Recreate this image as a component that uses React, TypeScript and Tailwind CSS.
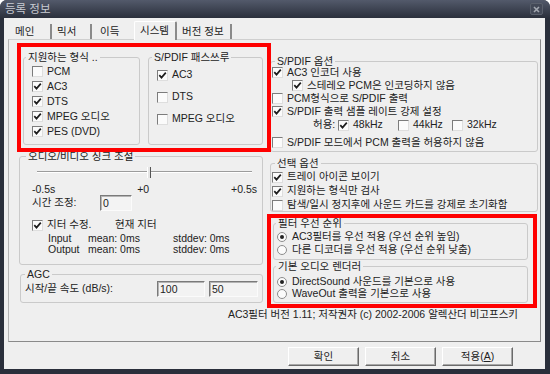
import React from "react";

const FONT = "font-['Liberation_Sans','Noto_Sans_CJK_KR',sans-serif]";

function Check({ on }: { on?: boolean }) {
  return (
    <span className="flex h-[11px] w-[11px] shrink-0 items-center justify-center border border-t-[#7c7c7c] border-l-[#7c7c7c] border-r-[#dedede] border-b-[#dedede] bg-[#fbfbfb]">
      {on && (
        <svg width="9" height="9" viewBox="0 0 9 9">
          <path d="M1.3 4.1 L3.5 6.6 L7.8 1.6" fill="none" stroke="#1c1c1c" strokeWidth="1.7" />
        </svg>
      )}
    </span>
  );
}

function Radio({ on }: { on?: boolean }) {
  return (
    <span className="flex h-[10px] w-[10px] shrink-0 items-center justify-center rounded-full border border-[#8c8c8c] bg-[#fbfbfb]">
      {on && <span className="h-[4px] w-[4px] rounded-full bg-[#222]" />}
    </span>
  );
}

function Field({ value, className = "" }: { value: string; className?: string }) {
  return (
    <div
      className={`h-[16px] border border-t-[#7a7a7a] border-l-[#7a7a7a] border-r-[#fbfbfb] border-b-[#fbfbfb] bg-[#f3f3f3] pl-[2px] leading-[14px] shadow-[inset_1px_1px_0_#b4b4b4] ${className}`}
    >
      {value}
    </div>
  );
}

function Group({
  title,
  className = "",
  legend = "ml-[3px]",
  children,
}: {
  title: string;
  className?: string;
  legend?: string;
  children?: React.ReactNode;
}) {
  return (
    <fieldset className={`rounded-[3px] border border-[#cacaca] ${className}`}>
      <legend className={`px-[2px] leading-[12px] ${legend}`}>{title}</legend>
      {children}
    </fieldset>
  );
}

function CheckRow({ on, label, className = "" }: { on?: boolean; label: string; className?: string }) {
  return (
    <div className={`flex items-center gap-[4px] ${className}`}>
      <Check on={on} />
      <span className="whitespace-nowrap">{label}</span>
    </div>
  );
}

function RadioRow({ on, label, className = "" }: { on?: boolean; label: string; className?: string }) {
  return (
    <div className={`flex items-center gap-[5px] ${className}`}>
      <Radio on={on} />
      <span className="whitespace-nowrap">{label}</span>
    </div>
  );
}

function Tabs() {
  return (
    <div className="flex h-[21px] items-end pl-[4px]">
      <div className="h-[15px] w-[44px] border-r-2 border-[#8a8a8a] pl-[7px] leading-[15px]">메인</div>
      <div className="h-[15px] w-[40px] border-r-2 border-[#8a8a8a] pl-[5px] leading-[15px]">믹서</div>
      <div className="h-[15px] w-[42px] pl-[8px] leading-[15px]">이득</div>
      <div className="relative z-10 -mb-px h-[19px] w-[43px] rounded-t-[2px] border-t border-l border-white border-r-2 border-r-[#8a8a8a] bg-[#efefef] pl-[5px] pt-[1px] leading-[15px]">
        시스템
      </div>
      <div className="h-[15px] w-[55px] border-r-2 border-[#8a8a8a] pl-[5px] leading-[15px]">버전 정보</div>
    </div>
  );
}

function LeftColumn() {
  return (
    <div className="flex w-[244px] flex-col pt-[11px]">
      <div className="flex gap-[8px] pl-[4px]">
        <Group title="지원하는 형식 .." className="h-[94px] w-[117px]" legend="ml-[2px]">
          <div className="flex flex-col pl-[8px] pt-[1px]">
            <CheckRow label="PCM" className="h-[15px]" />
            <CheckRow on label="AC3" className="h-[15px]" />
            <CheckRow on label="DTS" className="h-[15px]" />
            <CheckRow on label="MPEG 오디오" className="h-[15px]" />
            <CheckRow on label="PES (DVD)" className="h-[15px]" />
          </div>
        </Group>
        <Group title="S/PDIF 패스쓰루" className="h-[94px] w-[115px]" legend="ml-[3px]">
          <div className="flex flex-col pl-[8px] pt-[1px]">
            <CheckRow on label="AC3" className="h-[22px]" />
            <CheckRow label="DTS" className="h-[22px]" />
            <CheckRow label="MPEG 오디오" className="h-[22px]" />
          </div>
        </Group>
      </div>

      <Group title="오디오/비디오 싱크 조절" className="mt-[5px] h-[115px]" legend="ml-[6px]">
        <div className="box-content flex h-[12px] items-center pl-[17px] pr-[10px] pt-[4px]">
          <div className="h-[2px] w-[110px] border-t border-[#9c9c9c] border-b border-b-white" />
          <div className="h-[11px] w-[4px] border-l border-white border-r border-r-[#555] bg-[#e4e4e4]" />
          <div className="h-[2px] flex-1 border-t border-[#9c9c9c] border-b border-b-white" />
        </div>
        <div className="mt-[5px] flex h-[12px] items-center justify-between pl-[12px] pr-[5px] leading-[12px]">
          <span>-0.5s</span>
          <span>+0</span>
          <span>+0.5s</span>
        </div>
        <div className="flex h-[15px] items-center pl-[12px]">
          <span className="w-[68px]">시간 조정:</span>
          <Field value="0" className="h-[15px] w-[32px]" />
        </div>
        <div className="mt-[8px] flex h-[14px] items-center pl-[12px]">
          <Check on />
          <span className="ml-[4px] w-[68px]">지터 수정.</span>
          <span>현재 지터</span>
        </div>
        <div className="mt-[1px] flex h-[11px] items-center pl-[28px] leading-[11px]">
          <span className="w-[40px]">Input</span>
          <span className="w-[85px]">mean: 0ms</span>
          <span>stddev: 0ms</span>
        </div>
        <div className="flex h-[11px] items-center pl-[28px] leading-[11px]">
          <span className="w-[40px]">Output</span>
          <span className="w-[85px]">mean: 0ms</span>
          <span>stddev: 0ms</span>
        </div>
      </Group>

      <Group title="AGC" className="ml-[1px] mt-[3px] h-[35px]" legend="ml-[4px]">
        <div className="mt-[1px] flex h-[16px] items-center pl-[4px] pr-[4px]">
          <span className="flex-1">시작/끝 속도 (dB/s):</span>
          <Field value="100" className="w-[48px]" />
          <Field value="50" className="ml-[4px] w-[49px]" />
        </div>
      </Group>
    </div>
  );
}

function RightColumn() {
  return (
    <div className="flex w-[268px] flex-col pt-[15px]">
      <Group title="S/PDIF 옵션" className="h-[97px]" legend="ml-[4px]">
        <div className="-mt-[1px] flex flex-col pl-[1px]">
          <CheckRow on label="AC3 인코더 사용" className="h-[13px]" />
          <CheckRow on label="스테레오 PCM은 인코딩하지 않음" className="h-[13px] pl-[20px]" />
          <CheckRow label="PCM형식으로 S/PDIF 출력" className="h-[13px]" />
          <CheckRow on label="S/PDIF 출력 샘플 레이트 강제 설정" className="h-[13px]" />
          <div className="flex h-[14px] items-center pl-[41px]">
            <span className="w-[25px]">허용:</span>
            <CheckRow on label="48kHz" className="w-[60px]" />
            <CheckRow label="44kHz" className="w-[54px]" />
            <CheckRow label="32kHz" />
          </div>
          <CheckRow label="S/PDIF 모드에서 PCM 출력을 허용하지 않음" className="mt-[4px] h-[13px]" />
        </div>
      </Group>

      <Group title="선택 옵션" className="mt-[5px] h-[55px]" legend="ml-[4px]">
        <div className="flex flex-col pl-[1px] pt-[1px]">
          <CheckRow on label="트레이 아이콘 보이기" className="h-[14px]" />
          <CheckRow on label="지원하는 형식만 검사" className="h-[14px]" />
          <CheckRow label="탐색/일시 정지후에 사운드 카드를 강제로 초기화함" className="h-[14px]" />
        </div>
      </Group>

      <Group title="필터 우선 순위" className="ml-[3px] mr-[10px] mt-[5px] h-[43px]" legend="ml-[2px]">
        <div className="flex flex-col pl-[3px] pt-[1px]">
          <RadioRow on label="AC3필터를 우선 적용 (우선 순위 높임)" className="h-[13px]" />
          <RadioRow label="다른 디코더를 우선 적용 (우선 순위 낮춤)" className="h-[13px]" />
        </div>
      </Group>

      <Group title="기본 오디오 렌더러" className="ml-[3px] mr-[10px] h-[43px]" legend="ml-[2px]">
        <div className="flex flex-col pl-[3px] pt-[4px]">
          <RadioRow on label="DirectSound 사운드를 기본으로 사용" className="h-[12px]" />
          <RadioRow label="WaveOut 출력을 기본으로 사용" className="h-[12px]" />
        </div>
      </Group>
    </div>
  );
}

export default function App() {
  return (
    <div className={`${FONT} flex h-[374px] w-[550px] flex-col overflow-hidden rounded-t-[7px] bg-[#2a2f3b] text-[10.5px] text-[#222]`}>
      <div className="flex h-[18px] shrink-0 items-center bg-gradient-to-b from-[#535a6b] to-[#2b303c] pl-[5px] pr-[7px]">
        <span className="text-[11.5px] leading-[14px] text-[#c9ccd3]">등록 정보</span>
        <div className="flex-1" />
        <div className="flex h-[12px] w-[13px] items-center justify-center rounded-[2px] border border-[#5a606c] bg-[#434957]">
          <svg width="7" height="7" viewBox="0 0 7 7">
            <path d="M1 1 L6 6 M6 1 L1 6" stroke="#a3a8b1" strokeWidth="1.6" />
          </svg>
        </div>
      </div>

      <div className="ml-[4px] flex h-[351px] w-[541px] flex-col bg-[#efefef]">
        <Tabs />
        <div className="relative ml-[4px] h-[303px] w-[533px] border border-t-[#cfcfcf] border-l-[#b4b4b4] border-r-[#8a8a8a] border-b-[#8a8a8a]">
          <div className="flex gap-[7px] pl-[10px]">
            <LeftColumn />
            <RightColumn />
          </div>
          <div className="mt-[5px] flex h-[13px] items-center justify-end pr-[22px] leading-[13px]">
            AC3필터 버전 1.11; 저작권자 (c) 2002-2006 알렉산더 비고프스키
          </div>

          <div className="pointer-events-none absolute left-[8px] top-[3px] h-[109px] w-[254px] border-4 border-[#ff0000]" />
          <div className="pointer-events-none absolute left-[258px] top-[174px] h-[94px] w-[270px] border-4 border-[#ff0000]" />
        </div>

        <div className="mt-[5px] flex justify-end gap-[6px] pr-[32px]">
          {["확인", "취소"].map((t) => (
            <div
              key={t}
              className="flex h-[19px] w-[71px] items-center justify-center border border-t-white border-l-white border-r-[#6a6a6a] border-b-[#6a6a6a] shadow-[inset_-1px_-1px_0_#a8a8a8]"
            >
              {t}
            </div>
          ))}
          <div className="flex h-[19px] w-[71px] items-center justify-center border border-t-white border-l-white border-r-[#6a6a6a] border-b-[#6a6a6a] shadow-[inset_-1px_-1px_0_#a8a8a8]">
            적용(<span className="underline">A</span>)
          </div>
        </div>
      </div>
    </div>
  );
}
